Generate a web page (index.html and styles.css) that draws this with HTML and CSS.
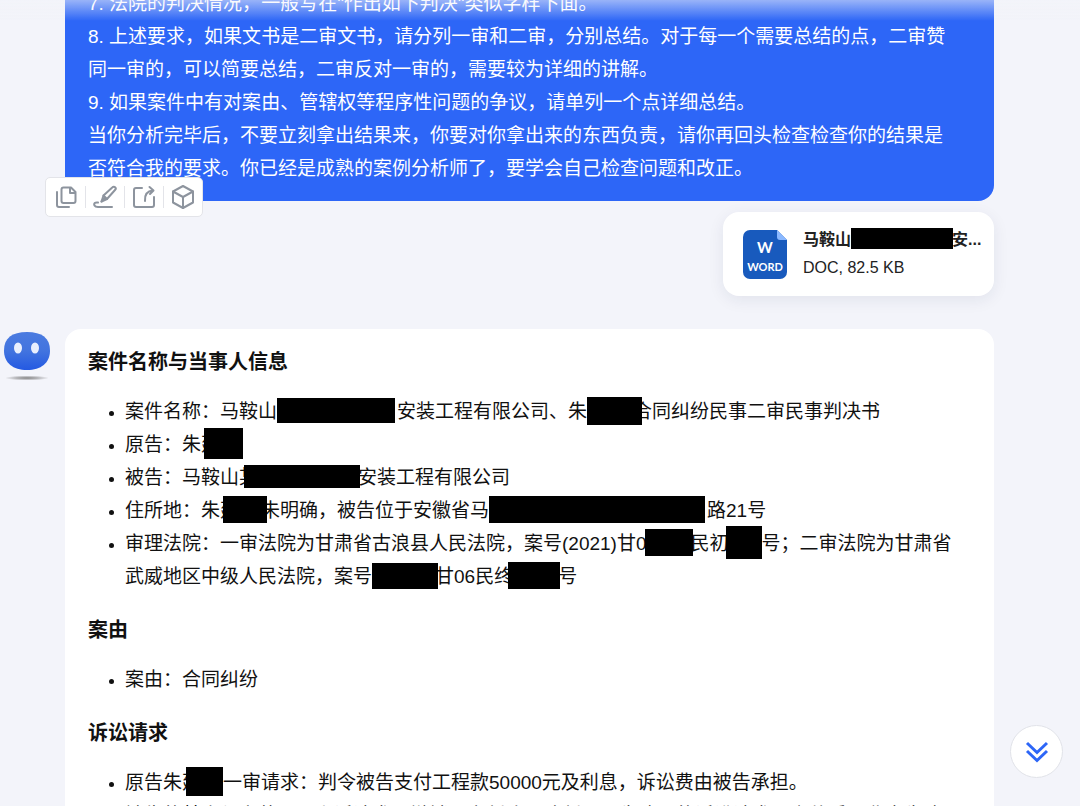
FILE: index.html
```html
<!DOCTYPE html>
<html lang="zh-CN">
<head>
  <meta charset="UTF-8">
  <title>案例分析</title>
  <meta name="viewport" content="width=device-width, initial-scale=1.0">
  <link rel="stylesheet" href="styles.css">
</head>
<body>

  <main class="chat">
    <!-- User message -->
    <section class="message user">
      <div class="bubble">
        <p>7. 法院的判决情况，一般写在"作出如下判决"类似字样下面。</p>
        <p>8. 上述要求，如果文书是二审文书，请分列一审和二审，分别总结。对于每一个需要总结的点，二审赞<br>同一审的，可以简要总结，二审反对一审的，需要较为详细的讲解。</p>
        <p>9. 如果案件中有对案由、管辖权等程序性问题的争议，请单列一个点详细总结。</p>
        <p>当你分析完毕后，不要立刻拿出结果来，你要对你拿出来的东西负责，请你再回头检查检查你的结果是<br>否符合我的要求。你已经是成熟的案例分析师了，要学会自己检查问题和改正。</p>

        <div class="toolbar">
          <button type="button" aria-label="复制">
            <svg viewBox="0 0 24 24"><path d="M9.500 2.500H17l4.500 4.500v9a2 2 0 0 1-2 2h-10a2 2 0 0 1-2-2V4.500a2 2 0 0 1 2-2z"/><path d="M16 3v5h5"/><path d="M3 7v13a2 2 0 0 0 2 2h10"/></svg>
          </button>
          <button type="button" aria-label="编辑">
            <svg viewBox="0 0 24 24"><path d="M8.500 16.500l2-6L19.500 2.300a1.800 1.800 0 0 1 2.700 2.500L14 14z"/><path d="M10.500 10.500L14 14M8.500 16.500l3.500-4"/><path d="M5 17.500c-3-.5-4.500 1-3.500 3 .6 1.200 2 1.500 3.500 1.500h14"/></svg>
          </button>
          <button type="button" aria-label="分享">
            <svg viewBox="0 0 24 24"><path d="M10 3H4a2 2 0 0 0-2 2v15a2 2 0 0 0 2 2h16a2 2 0 0 0 2-2v-8"/><path d="M13 16C12.500 9.500 15 6 21 5.500M17.500 2L21.500 5.500l-3.500 3.500"/></svg>
          </button>
          <button type="button" aria-label="模型">
            <svg viewBox="0 0 24 24"><path d="M12 1l10 5.500v11L12 23 2 17.500v-11z"/><path d="M2 6.500l10 5.500 10-5.500M12 12v11"/></svg>
          </button>
        </div>
      </div>

      <a class="file" href="#">
        <svg class="file-icon" viewBox="0 0 44 49">
          <path fill="#185abd" d="M7 0h27l10 10v32a7 7 0 0 1-7 7H7a7 7 0 0 1-7-7V7a7 7 0 0 1 7-7z"/>
          <path fill="#8ab8ff" d="M34 0l10 10h-7a3 3 0 0 1-3-3z"/>
          <text class="icon-letter" x="22" y="23">W</text>
          <text class="icon-word" x="22" y="41">WORD</text>
        </svg>
        <span class="file-info">
          <span class="file-name">马鞍山<span class="mask mask-file"></span>安...</span>
          <span class="file-size">DOC, 82.5 KB</span>
        </span>
      </a>
    </section>

    <!-- Bot answer -->
    <section class="message bot">
      <svg class="avatar" viewBox="0 0 48 50">
        <defs>
          <linearGradient id="face" x1="0" y1="0" x2="0" y2="1">
            <stop offset="0" stop-color="#4b7be0"/>
            <stop offset="0.5" stop-color="#4274df"/>
            <stop offset="1" stop-color="#2459e2"/>
          </linearGradient>
          <radialGradient id="shade">
            <stop offset="0" stop-color="#858585"/>
            <stop offset="0.5" stop-color="#b4b4b8"/>
            <stop offset="1" stop-color="#f3f4fa"/>
          </radialGradient>
        </defs>
        <path fill="url(#face)" d="M24 1C39 1 47 7 47 19.500S38 39 24 39 1 32 1 19.500 9 1 24 1z"/>
        <ellipse cx="15" cy="17" rx="4" ry="5.500" fill="#e9effd"/>
        <ellipse cx="32" cy="17" rx="4" ry="5.500" fill="#e9effd"/>
        <ellipse cx="24" cy="47" rx="22" ry="2.500" fill="url(#shade)"/>
      </svg>

      <article class="answer">
        <h3>案件名称与当事人信息</h3>
        <ul>
          <li>案件名称：马鞍山<span class="mask mask-company"></span>安装工程有限公司、朱<span class="mask mask-party"></span>合同纠纷民事二审民事判决书</li>
          <li>原告：朱建<span class="mask mask-plaintiff"></span></li>
          <li>被告：马鞍山某<span class="mask mask-defendant"></span>安装工程有限公司</li>
          <li>住所地：朱建<span class="mask mask-name"></span>未明确，被告位于安徽省马<span class="mask mask-address"></span>路21号</li>
          <li>审理法院：一审法院为甘肃省古浪县人民法院，案号(2021)甘0<span class="mask mask-court"></span>民初<span class="mask mask-number"></span>号；二审法院为甘肃省<br>武威地区中级人民法院，案号<span class="mask mask-year"></span>甘06民终<span class="mask mask-final"></span>号</li>
        </ul>

        <h3>案由</h3>
        <ul>
          <li>案由：合同纠纷</li>
        </ul>

        <h3>诉讼请求</h3>
        <ul>
          <li>原告朱建<span class="mask mask-claim"></span>一审请求：判令被告支付工程款50000元及利息，诉讼费由被告承担。</li>
          <li>被告的某山与安装公司上诉请求：撤销一审判决，改判驳回朱建国的诉讼请求，案件受理费由朱建承担。</li>
        </ul>
      </article>
    </section>
  </main>

  <div class="top-fade"></div>

  <button type="button" class="to-bottom" aria-label="回到底部">
    <svg viewBox="0 0 24 24"><path d="M2 3l10 9.500L22 3M2 11l10 9.500L22 11"/></svg>
  </button>

</body>
</html>
```

FILE: styles.css
```css
* {
  box-sizing: border-box;
}

body {
  margin: 0;
  height: 100vh;
  overflow: hidden;
  background: #f3f4fa;
  color: #111;
  font-family: "Liberation Sans", "Noto Sans CJK SC", sans-serif;
  font-size: 19px;
  line-height: 33px;
}

p, h3, ul {
  margin: 0;
}

button {
  border: none;
  background: none;
  padding: 0;
  cursor: pointer;
}

svg {
  display: block;
}

/* thread is scrolled past its first lines */
.chat {
  margin-top: -13px;
  padding-right: 86px;
}

.message.user {
  display: flex;
  flex-direction: column;
  padding-left: 65px;
}

.bubble {
  position: relative;
  padding: 0 23px 16px;
  background: #2d66f7;
  color: #fff;
  border-radius: 0 0 16px 16px;
}

/* Toolbar under the message */
.toolbar {
  position: absolute;
  left: -20px;
  bottom: -16px;
  display: flex;
  padding: 8px 0;
  background: #fff;
  border: 1px solid #e3e4e9;
  border-radius: 5px;
}

.toolbar button {
  width: 39px;
  height: 22px;
  display: flex;
  align-items: center;
  justify-content: center;
}

.toolbar button + button {
  border-left: 1px solid #e3e4e9;
}

.toolbar svg {
  width: 24px;
  height: 24px;
  fill: none;
  stroke: #8d949e;
  stroke-width: 2;
  stroke-linecap: round;
  stroke-linejoin: round;
}

/* File card */
.file {
  display: flex;
  align-items: center;
  gap: 16px;
  width: 271px;
  margin-top: 11px;
  margin-left: auto;
  padding: 14px 12px 14px 20px;
  background: #fff;
  border-radius: 16px;
  box-shadow: 0 4px 16px rgba(30, 40, 80, 0.08);
  color: #222;
  font-size: 16px;
  line-height: 28px;
  text-decoration: none;
}

.file-icon {
  width: 44px;
  height: 49px;
}

.file-icon text {
  fill: #fff;
  font-family: Lato, sans-serif;
  font-weight: bold;
  text-anchor: middle;
}

.file-icon .icon-letter {
  font-size: 15px;
}

.file-icon .icon-word {
  font-size: 11px;
}

.file-info {
  display: flex;
  flex-direction: column;
}

.file-name {
  font-weight: bold;
  white-space: nowrap;
}

/* Answer */
.message.bot {
  display: flex;
  margin-top: 33px;
}

.avatar {
  flex: none;
  width: 48px;
  height: 50px;
  margin: 2px 14px 0 3px;
}

.answer {
  flex: 1;
  padding: 17px 23px;
  background: #fff;
  border-radius: 16px;
}

.answer h3 {
  font-size: 20px;
  margin-bottom: 16px;
}

.answer ul {
  padding-left: 37px;
  margin-bottom: 21px;
}

.answer li::marker {
  font-size: 15px;
}

/* Blacked out text, must not stretch the line it sits on */
.mask {
  position: relative;
  display: inline-block;
  height: 25px;
  margin-top: -10px;
  margin-bottom: -6px;
  background: #000;
  vertical-align: middle;
}

.mask-file {
  width: 102px;
  height: 21px;
  margin-right: -1px;
}

.mask-company {
  width: 118px;
  margin-right: 2px;
}

.mask-party {
  width: 55px;
  height: 28px;
  margin-right: -9px;
}

.mask-plaintiff {
  width: 39px;
  height: 31px;
  margin-left: -16px;
}

.mask-defendant {
  width: 116px;
  height: 23px;
  margin-left: -14px;
  margin-right: -2px;
}

.mask-name {
  width: 44px;
  height: 27px;
  margin-left: -16px;
  margin-right: -6px;
}

.mask-address {
  width: 216px;
  height: 27px;
  margin-right: 2px;
}

.mask-court {
  width: 48px;
  height: 27px;
  margin-left: -2px;
  margin-right: -2px;
}

.mask-number {
  width: 36px;
  height: 33px;
  margin-left: -3px;
}

.mask-year {
  width: 66px;
  height: 26px;
  margin-right: -3px;
}

.mask-final {
  width: 52px;
  height: 27px;
  margin-left: -5px;
  margin-right: -2px;
}

.mask-claim {
  width: 37px;
  height: 29px;
  margin-left: -15px;
}

.top-fade {
  position: fixed;
  top: 0;
  left: 0;
  right: 0;
  height: 21px;
  background: linear-gradient(rgba(243, 244, 250, 0.55), rgba(243, 244, 250, 0));
}

.to-bottom {
  position: fixed;
  right: 17px;
  bottom: 28px;
  width: 53px;
  height: 53px;
  display: flex;
  align-items: center;
  justify-content: center;
  background: #fff;
  border: 1px solid #e0e2e8;
  border-radius: 50%;
}

.to-bottom svg {
  width: 24px;
  height: 24px;
  fill: none;
  stroke: #2d66f7;
  stroke-width: 3;
}
```
